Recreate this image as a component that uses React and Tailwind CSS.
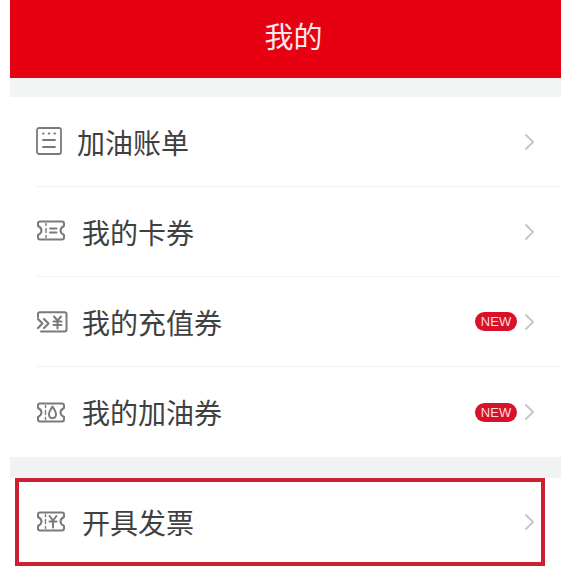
import React from 'react';

const cjk = 'font-["Noto_Sans_CJK_SC","Noto_Sans",sans-serif]';

const stroke = {
  fill: 'none',
  stroke: '#7a7a7a',
  strokeWidth: 2,
  strokeLinejoin: 'round',
  strokeLinecap: 'round',
};

// ticket outline with a notch on both short sides
const ticketPath =
  'M4 1.5H26C27.2 1.5 28 2.3 28 3.5V6C26 7 24.5 8.5 24.5 10.5C24.5 12.5 26 14 28 15V17.5C28 18.7 27.2 19.5 26 19.5H4C2.8 19.5 2 18.7 2 17.5V15C4 14 5.5 12.5 5.5 10.5C5.5 8.5 4 7 2 6V3.5C2 2.3 2.8 1.5 4 1.5Z';

function BillIcon() {
  return (
    <svg width="26" height="28" viewBox="0 0 26 28" {...stroke} strokeWidth="1.8">
      <rect x="1" y="1" width="24" height="26" rx="2" />
      <path d="M7 6.5H7.6M12.7 6.5H13.3M18.4 6.5H19" strokeWidth="2" />
      <path d="M7 13H19M7 20H19" />
    </svg>
  );
}

function CardIcon() {
  return (
    <svg width="30" height="21" viewBox="0 0 30 21" {...stroke}>
      <path d={ticketPath} />
      <path d="M10 3.5V5.5M10 8.5V12.5M10 15.5V17.5" strokeWidth="1.4" />
      <path d="M14 8.5H20.5M14 12.5H20.5" />
    </svg>
  );
}

function RechargeIcon() {
  return (
    <svg width="32" height="22" viewBox="0 0 32 22" {...stroke}>
      <path d="M2 6V3C2 2 2.8 1.2 4 1.2H28.5C29.7 1.2 30.5 2 30.5 3V18.5C30.5 19.7 29.7 20.5 28.5 20.5H5" />
      <path d="M2 8L6.5 12.5L2 17M8 8L12.5 12.5L8 17" strokeWidth="2.2" />
      <path d="M18 5.5L21.5 9.5L25 5.5M17.5 10.5H25.5M17.5 14H25.5M21.5 9.5V17.5" />
    </svg>
  );
}

function DropTicketIcon() {
  return (
    <svg width="30" height="21" viewBox="0 0 30 21" {...stroke}>
      <path d={ticketPath} />
      <path d="M9.5 3.5V5.5M9.5 8.5V12.5M9.5 15.5V17.5" strokeWidth="1.4" />
      <path d="M16.5 4.5C14.8 7.3 13 9.3 13 12C13 14.6 14.6 16.2 16.5 16.2C18.4 16.2 20 14.6 20 12C20 9.3 18.2 7.3 16.5 4.5Z" />
    </svg>
  );
}

function InvoiceIcon() {
  return (
    <svg width="30" height="21" viewBox="0 0 30 21" {...stroke}>
      <path d={ticketPath} />
      <path d="M9.5 3.5V5.5M9.5 8.5V12.5M9.5 15.5V17.5" strokeWidth="1.4" />
      <path d="M13.5 5L17 9.5L20.5 5M13.5 10.5H20.5M17 9.5V16.5" />
    </svg>
  );
}

function Chevron() {
  return (
    <svg width="11" height="18" viewBox="0 0 11 18" fill="none" stroke="#c6c8c8" strokeWidth="2">
      <path d="M1.5 1.5L9 9L1.5 16.5" />
    </svg>
  );
}

function NewBadge() {
  return (
    <span className='flex h-[19px] w-[42px] items-center justify-center rounded-full bg-[#d8122a] font-["Liberation_Sans",sans-serif] text-[13px] leading-none text-[#fbdcdc]'>
      NEW
    </span>
  );
}

const rows = [
  { label: '加油账单', icon: <BillIcon />, iconBox: 'w-[41px] pb-[1px]' },
  { label: '我的卡券', icon: <CardIcon />, iconBox: 'w-[46px] pb-[2px]' },
  { label: '我的充值券', icon: <RechargeIcon />, iconBox: 'w-[46px]', isNew: true },
  { label: '我的加油券', icon: <DropTicketIcon />, iconBox: 'w-[46px]', isNew: true },
];

function Row({ row, last }) {
  return (
    <div className={`flex h-[90px] items-center pr-[26px] ${last ? '' : 'border-b border-[#f1f2f2]'}`}>
      <span className={`flex shrink-0 items-center ${row.iconBox}`}>{row.icon}</span>
      <span className="text-[28px] leading-none text-[#404040]">{row.label}</span>
      <span className="ml-auto flex items-center gap-[7px]">
        {row.isNew && <NewBadge />}
        <Chevron />
      </span>
    </div>
  );
}

export default function App() {
  return (
    <div className={`h-[575px] w-[561px] overflow-hidden bg-white pl-[10px] ${cjk}`}>
      <header className="flex h-[78px] items-center justify-center bg-[#e60012] pb-[6px] pl-[16px] text-[29px] text-[#fbe9e9]">
        我的
      </header>
      <div className="h-[19px] bg-[#f2f3f3]" />

      <div className="pl-[26px]">
        {rows.map((row, i) => (
          <Row key={row.label} row={row} last={i === rows.length - 1} />
        ))}
      </div>

      <div className="h-[21px] bg-[#f1f2f2]" />

      <div className="ml-[5px] flex h-[88px] w-[530px] items-center border-4 border-[#cb2032] bg-white pl-[17px] pr-[6px]">
        <span className="flex w-[46px] shrink-0 items-center pb-[2px]">
          <InvoiceIcon />
        </span>
        <span className="text-[28px] leading-none text-[#404040]">开具发票</span>
        <span className="ml-auto flex items-center">
          <Chevron />
        </span>
      </div>
    </div>
  );
}
